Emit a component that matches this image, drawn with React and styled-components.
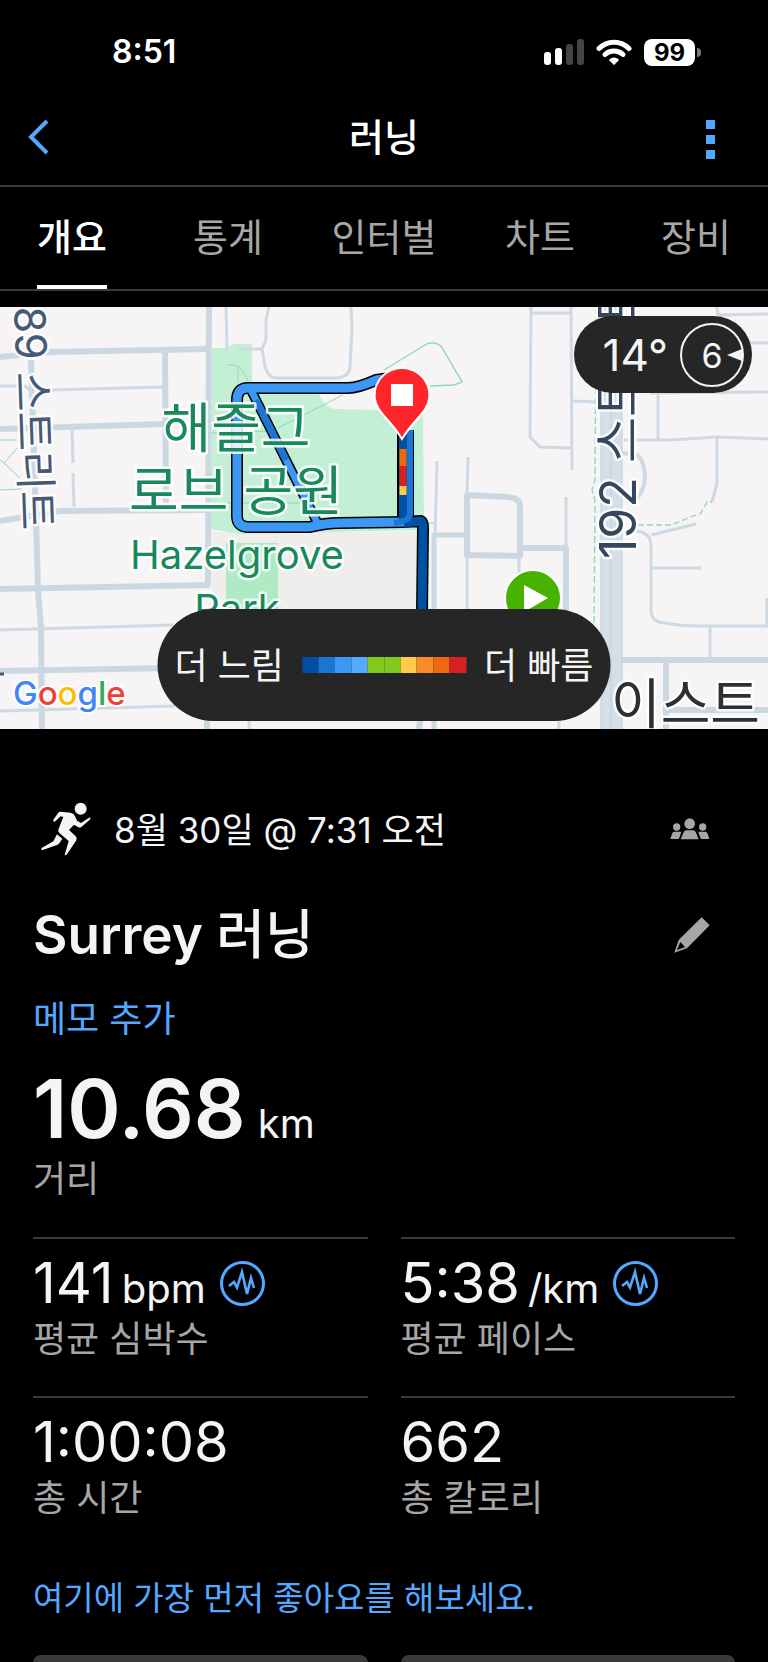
import React, { useState } from "react";
import styled, { createGlobalStyle } from "styled-components";

const GlobalStyle = createGlobalStyle`
  * {
    box-sizing: border-box;
  }

  body {
    margin: 0;
    background-color: #000;
    color: #f4f4f4;
    font-family: "Inter", "Noto Sans CJK KR", sans-serif;
  }

  button {
    padding: 0;
    border: none;
    background: none;
    color: inherit;
    font-family: inherit;
    cursor: pointer;
  }
`;

const Screen = styled.div`
  height: 100vh;
  overflow: hidden;
  display: flex;
  flex-direction: column;
`;

const StatusBar = styled.div`
  flex: none;
  height: 88px;
  padding: 16px 67px 0 112px;
  display: flex;
  justify-content: space-between;
  align-items: center;
  color: white;
`;

const Clock = styled.div`
  font-size: 32px;
  line-height: 40px;
  font-weight: 600;
`;

const StatusIcons = styled.div`
  display: flex;
  align-items: center;
  gap: 12px;
`;

const Battery = styled.div`
  display: flex;
  align-items: center;
  gap: 2px;
`;

const BatteryLevel = styled.div`
  width: 51px;
  height: 27px;
  border-radius: 8px;
  background-color: white;
  color: black;
  font-size: 24px;
  line-height: 27px;
  font-weight: 700;
  text-align: center;
`;

const BatteryTip = styled.div`
  width: 4px;
  height: 9px;
  border-radius: 0 4px 4px 0;
  background-color: #777;
`;

const Header = styled.header`
  flex: none;
  height: 99px;
  padding: 0 28px;
  display: grid;
  grid-template-columns: 1fr auto 1fr;
  align-items: center;
  border-bottom: 2px solid #3a3a3a;
`;

const HeaderTitle = styled.h1`
  margin: 0;
  color: white;
  font-size: 38px;
  line-height: 48px;
  font-weight: 500;
`;

const IconBtn = styled.button`
  display: flex;
  color: ${({ $color }) => $color || "#53a8ff"};
  justify-self: ${({ $end }) => ($end ? "end" : "start")};
`;

const MoreDots = styled.span`
  display: flex;
  flex-direction: column;
  gap: 6px;
  margin: 6px 25px 0;
`;

const Dot = styled.span`
  width: 9px;
  height: 9px;
  background-color: #53a8ff;
`;

const Tabs = styled.nav`
  flex: none;
  margin-bottom: 16px;
  border-bottom: 2px solid #3a3a3a;
`;

const TabList = styled.div`
  display: grid;
  grid-template-columns: repeat(5, 1fr);
  margin: 0 -6px;
`;

const Tab = styled.button`
  display: flex;
  justify-content: center;
  font-size: 38px;
  font-weight: ${({ $active }) => ($active ? 500 : 400)};
  color: ${({ $active }) => ($active ? "white" : "#a6a6a6")};
`;

const TabLabel = styled.span`
  height: 102px;
  line-height: 100px;
  border-bottom: 4px solid ${({ $active }) => ($active ? "white" : "transparent")};
`;

const MapArea = styled.section`
  flex: none;
  height: 422px;
  position: relative;
  overflow: hidden;
  background-color: #f6f4f5;
`;

const MapSvg = styled.svg`
  display: block;
  width: 100%;
  height: 100%;
`;

const Weather = styled.div`
  position: absolute;
  top: 9px;
  right: 16px;
  height: 77px;
  padding: 0 8px 0 28px;
  display: flex;
  align-items: center;
  gap: 12px;
  border-radius: 39px;
  background-color: #262626;
  font-size: 44px;
`;

const Legend = styled.div`
  position: absolute;
  bottom: 8px;
  left: 50%;
  transform: translateX(-50%);
  height: 112px;
  padding: 0 17px;
  display: flex;
  align-items: center;
  gap: 18px;
  border-radius: 56px;
  background-color: #262626;
  font-size: 36px;
  white-space: nowrap;
`;

const LegendText = styled.span`
  padding-bottom: 4px;
`;

const Scale = styled.div`
  width: 164px;
  height: 16px;
  display: flex;
`;

const Swatch = styled.span`
  flex: 1;
  background-color: ${({ $color }) => $color};
`;

const Content = styled.main`
  padding: 72px 33px 0;
`;

const Row = styled.div`
  display: flex;
  justify-content: space-between;
  align-items: center;
  padding-right: 25px;
`;

const TitleRow = styled(Row)`
  margin: 46px 0 30px;
`;

const DateInfo = styled.div`
  height: 56px;
  padding-left: 7px;
  display: flex;
  align-items: center;
  gap: 21px;
  font-size: 35px;
`;

const DateText = styled.span`
  padding-bottom: 4px;
`;

const Title = styled.h2`
  margin: 0;
  font-size: 53px;
  line-height: 64px;
  font-weight: 600;
`;

const Sport = styled.span`
  font-weight: 500;
`;

const TextLink = styled.a`
  display: block;
  color: #53a8ff;
  font-size: ${({ $size }) => $size}px;
  line-height: 44px;
  text-decoration: none;
`;

const Distance = styled.div`
  margin: 20px 0 0;
  font-size: 81px;
  line-height: 96px;
  font-weight: 600;
`;

const Unit = styled.span`
  margin-left: ${({ $gap }) => $gap}px;
  font-size: 40px;
  line-height: 1;
  font-weight: 400;
`;

const Label = styled.div`
  color: #a6a6a6;
  font-size: 36px;
  line-height: 44px;
`;

const Grid = styled.div`
  display: grid;
  grid-template-columns: 1fr 1fr;
  gap: 35px 33px;
  margin: 36px 0 56px;
`;

const Stat = styled.div`
  padding-top: 10px;
  border-top: 2px solid #3a3a3a;
`;

const StatValue = styled.div`
  display: flex;
  align-items: center;
  gap: 14px;
  font-size: 56px;
  line-height: 68px;
`;

const Actions = styled.div`
  display: grid;
  grid-template-columns: 1fr 1fr;
  gap: 33px;
  margin-top: 35px;
`;

const ActionBtn = styled.button`
  height: 80px;
  border-radius: 8px;
  background-color: #3a3a3a;
`;

const tabs = ["개요", "통계", "인터벌", "차트", "장비"];

const paceColors = [
  "#004fa3",
  "#1976d5",
  "#3d97f6",
  "#54aaff",
  "#82c91e",
  "#82c91e",
  "#ffcb4d",
  "#fa8b28",
  "#ec690f",
  "#d62021",
];

const stats = [
  { value: "141", unit: "bpm", label: "평균 심박수", zone: true },
  { value: "5:38", unit: "/km", label: "평균 페이스", zone: true },
  { value: "1:00:08", label: "총 시간" },
  { value: "662", label: "총 칼로리" },
];

const SignalIcon = () => (
  <svg width="40" height="27" viewBox="0 0 40 27">
    <rect x="0" y="13" width="7" height="13" rx="3" fill="white" />
    <rect x="11" y="9" width="7" height="17" rx="3" fill="white" />
    <rect x="22" y="5" width="7" height="21" rx="3" fill="#444" />
    <rect x="33" y="0" width="7" height="26" rx="3" fill="#444" />
  </svg>
);

const WifiIcon = () => (
  <svg width="36" height="27" viewBox="0 0 36 27" fill="none" stroke="white">
    <path d="M3 9.5 C11 1 25 1 33 9.5" strokeWidth="5" strokeLinecap="round" />
    <path d="M9 15.5 C14 10.8 22 10.8 27 15.5" strokeWidth="5" strokeLinecap="round" />
    <path d="M18 25.5 L13.4 21 C16 18.4 20 18.4 22.6 21 Z" fill="white" strokeWidth="1" strokeLinejoin="round" />
  </svg>
);

const BackIcon = () => (
  <svg width="22" height="36" viewBox="0 0 22 36" fill="none" stroke="currentColor" strokeWidth="4">
    <path d="M19 2 L3 18 L19 34" />
  </svg>
);

const RunnerIcon = () => (
  <svg width="53" height="56" viewBox="120 65 159 168" fill="#f4f4f4">
    <circle cx="242" cy="88" r="18" />
    <path d="M181 97 L212 100 Q222 102 225 111 L231 124 L243 131 L267 115 Q273 114 271 120 L244 143 Q240 146 235 144 L222 136 L207 152 L227 171 Q232 176 229 183 L201 225 Q197 230 194 226 L206 185 L178 161 Q172 155 176 148 L190 113 L182 111 L166 126 Q159 130 160 121 L175 100 Q177 97 181 97 Z" />
    <path d="M171 165 L187 178 L178 192 Q175 195 171 197 L128 212 Q121 212 125 206 L160 186 Z" />
  </svg>
);

const GroupIcon = () => (
  <svg width="40" height="22" viewBox="91 119 120 66" fill="currentColor">
    <circle cx="150" cy="136" r="16" />
    <circle cx="111" cy="146" r="11" />
    <circle cx="189" cy="146" r="11" />
    <path d="M123 183 L131 163 Q134 156 140 156 L160 156 Q166 156 169 163 L177 183 Z" />
    <path d="M92 182 L97 166 Q99 160 104 160 L125 160 Q122 172 117 182 Z" />
    <path d="M209 182 L204 166 Q202 160 197 160 L176 160 Q179 172 184 182 Z" />
  </svg>
);

const PencilIcon = () => (
  <svg width="36" height="36" viewBox="97 411 108 108" fill="currentColor">
    <path fillRule="evenodd" d="M180 412 L204 436 L136 505 L98 518 L111 480 Z M116 486 L130 501 L106 510 Z" />
  </svg>
);

const ZoneIcon = () => (
  <svg width="45" height="45" viewBox="0 0 45 45" fill="none" stroke="#53a8ff" strokeWidth="3">
    <circle cx="22.5" cy="22.5" r="21" />
    <path strokeWidth="2.6" d="M9 25 L14 21 L17 26.5 L22 11 L27 33 L31 17 L34 27" />
  </svg>
);

const WindIcon = () => (
  <svg width="64" height="64" viewBox="0 0 64 64">
    <circle cx="32" cy="32" r="31" fill="none" stroke="#f4f4f4" strokeWidth="2" />
    <path d="M47 32 L62 26 V38 Z" fill="#f4f4f4" />
    <text x="32" y="45" textAnchor="middle" fontSize="34" fill="#f4f4f4">
      6
    </text>
  </svg>
);

const ActivityMap = () => (
  <MapSvg viewBox="0 307 768 422" preserveAspectRatio="xMidYMid slice">
    {/* school grounds and park */}
    <path d="M212 532 H421 V612 H212 Z" fill="#efeeec" />
    <path d="M226 543 H278 V612 H226 Z" fill="#aeebc5" />
    <path
      d="M212 348 H229 L232 344 H252 V386 L318 392 Q325 409 337 409 L423 411 L424 530 L240 534 L211 529 Z"
      fill="#c3f0d5"
    />

    {/* streets */}
    <g fill="none" stroke="#ccd8e1" strokeWidth="6" strokeLinejoin="round">
      <path d="M0 357 L50 352 L209 349" />
      <path d="M209 307 L208 585 M207 715 V729" />
      <path d="M165 350 L166 504" />
      <path d="M0 429 L164 424" />
      <path d="M0 521 L60 511 L208 510" />
      <path d="M31 360 L36 520 L38 590 L41 627 L42 729" />
      <path d="M0 589 L210 585" />
      <path d="M0 671 L170 668" />
      <path d="M434 729 V610 V535 H465" strokeWidth="5" />
      <path d="M467 495 L507 497 Q520 498 520 506 V556 L467 555 Z" />
      <path d="M520 548 H566 V615" />
      <path d="M622 660 H768 M666 660 V729 M666 710 H768" />
      <path d="M421 715 L419 729" />
    </g>
    <g fill="none" stroke="#ced9e3" strokeWidth="3" strokeLinejoin="round">
      <path d="M226 307 L227 350" />
      <path d="M269 307 L266 320 V340 L262 349 H238 M262 349 L265 366 Q268 378 276 378 H338 Q350 376 350 366 L352 330 L351 307" />
      <path d="M0 386 H25 L32 392 M50 390 L164 387" />
      <path d="M72 430 L73 463 M73 473 L74 507" />
      <path d="M0 630 L173 625 M0 711 L175 706 M249 715 V729" />
      <path d="M531 307 L530 437 L540 447 L572 448 M531 313 H571 M571 307 L572 470" />
      <path d="M572 401 L596 402" />
      <path d="M717 307 L718 315 L768 314 M750 343 H768 M650 393 L768 392 M658 393 V439" />
      <path d="M624 440 H671 L717 437 L768 439 M717 437 V483 L712 502" />
      <path d="M622 453 L637 455 Q644 460 645 477 Q645 492 632 504" strokeWidth="4" />
      <path d="M437 461 L435 535 M468 457 L467 495 M467 556 V615 M519 556 V580 M566 497 V548" />
      <path d="M634 531 Q650 531 651 545 V610 Q651 622 664 623 Q680 626 700 626 H768" />
      <path d="M651 535 L696 524 M651 568 H701 M710 626 V657 M767 598 V626 M559 715 V729" />
    </g>
    <path d="M601 307 H622 V729 H601 Z" fill="#d5dfe7" />
    <path d="M601 307 V729 M611 307 V729 M622 307 V729" stroke="#c3ced8" />

    {/* trails */}
    <g fill="none" stroke="#96d6bb" strokeWidth="1">
      <path d="M0 440 H17 M17 448 L4 463 L0 460 M4 463 L20 478 M0 490 L22 489" />
      <path d="M227 365 Q238 364 242 370 L249 383 M238 366 V382 M343 395 L278 428 M211 433 L267 431 M211 503 H310" />
      <path d="M384 370 L425 345 Q433 340 441 346 L462 382 L454 385 L430 386" strokeWidth="1.4" />
      <path d="M424 523 H434" />
      <path d="M596 307 L595 480 L592 490 L595 500 L594 626" strokeDasharray="7 3" strokeWidth="1.4" />
      <path d="M638 525 L671 525 L701 513 L707 502 L712 502" strokeDasharray="6 3" strokeWidth="1.4" />
    </g>

    {/* the run itself: black casing, then pace colours */}
    <g fill="none" strokeLinejoin="round">
      <g stroke="black" strokeWidth="12">
        <path d="M404 522 L421 521 Q423 522 423 528 L422 612" />
        <path d="M251 390 L312 512 L319 526" strokeWidth="10" />
        <path d="M404 376 L376 380 Q358 388 348 388 H248 Q237 388 237 400 V516 Q237 526 247 527 H310 Q325 523 340 523 L404 522" />
        <path d="M403 430 V522 M408 430 V522" />
      </g>
      <g stroke="#3d97f5" strokeWidth="9">
        <path d="M251 390 L312 512 L319 526" strokeWidth="7" />
        <path d="M404 376 L376 380 Q358 388 348 388 H248 Q237 388 237 400 V516 Q237 526 247 527 H310 Q325 523 340 523 L404 522" />
      </g>
      <path d="M256 400 L286 460" stroke="#1d74d2" strokeWidth="7" />
      <path d="M404 523 L421 521 Q423 522 423 529 L422 612" stroke="#0050a4" strokeWidth="9" />
      <path d="M403 430 V522" stroke="#0050a4" strokeWidth="8" />
      <path d="M410 430 V514 Q410 521 394 523" stroke="#1d74d2" strokeWidth="6" />
      <path d="M403 449 V466" stroke="#ec690f" strokeWidth="7" />
      <path d="M403 466 V486" stroke="#d62021" strokeWidth="7" />
      <path d="M403 486 V495" stroke="#ffcb4d" strokeWidth="7" />
    </g>

    {/* place names */}
    <g stroke="white" strokeOpacity="0.85" strokeWidth="5" strokeLinejoin="round" paintOrder="stroke">
      <g fill="#19885d" textAnchor="middle" fontSize="54">
        <text x="236" y="448">해즐그</text>
        <text x="236" y="511">로브 공원</text>
        <text x="237" y="569" fontSize="40">Hazelgrove</text>
        <text x="237" y="623" fontSize="40">Park</text>
      </g>
      <text transform="translate(14 307) rotate(88)" fontSize="43" fill="#475974">
        89 스트리트
      </text>
      <text transform="translate(636 559) rotate(-90)" fontSize="50" fill="#35475c">
        192 스트리트
      </text>
      <text x="611" y="724" fontSize="54" fill="#2c2f33">이스트</text>
    </g>
    <path d="M0 674 H4" stroke="#475974" strokeWidth="3" />
    <text
      x="13"
      y="705"
      fontSize="33"
      fontWeight="500"
      stroke="white"
      strokeWidth="4"
      paintOrder="stroke"
    >
      <tspan fill="#4285f4">G</tspan>
      <tspan fill="#ea4335">o</tspan>
      <tspan fill="#fbbc05">o</tspan>
      <tspan fill="#4285f4">g</tspan>
      <tspan fill="#34a853">l</tspan>
      <tspan fill="#ea4335">e</tspan>
    </text>

    {/* start and finish */}
    <circle cx="533" cy="598" r="28" fill="#48b200" stroke="white" strokeWidth="2" />
    <path d="M524 585 L548 598 L524 612 Z" fill="white" />
    <path
      d="M402 439 Q396 429 384 416 C374 405 374 395 375 390 C378 376 390 368 402 368 C414 368 426 376 429 390 C430 395 430 405 420 416 Q408 429 402 439 Z"
      fill="#ff262b"
      stroke="white"
      strokeWidth="2"
    />
    <rect x="391" y="384" width="22" height="22" fill="white" />
  </MapSvg>
);

const App = () => {
  const [active, setActive] = useState("개요");

  return (
    <Screen>
      <GlobalStyle />
      <StatusBar>
        <Clock>8:51</Clock>
        <StatusIcons>
          <SignalIcon />
          <WifiIcon />
          <Battery>
            <BatteryLevel>99</BatteryLevel>
            <BatteryTip />
          </Battery>
        </StatusIcons>
      </StatusBar>

      <Header>
        <IconBtn aria-label="뒤로">
          <BackIcon />
        </IconBtn>
        <HeaderTitle>러닝</HeaderTitle>
        <IconBtn aria-label="더 보기" $end>
          <MoreDots>
            <Dot />
            <Dot />
            <Dot />
          </MoreDots>
        </IconBtn>
      </Header>

      <Tabs>
        <TabList>
          {tabs.map((tab) => (
            <Tab key={tab} $active={tab === active} onClick={() => setActive(tab)}>
              <TabLabel $active={tab === active}>{tab}</TabLabel>
            </Tab>
          ))}
        </TabList>
      </Tabs>

      <MapArea>
        <ActivityMap />
        <Weather>
          14°
          <WindIcon />
        </Weather>
        <Legend>
          <LegendText>더 느림</LegendText>
          <Scale>
            {paceColors.map((color, index) => (
              <Swatch key={index} $color={color} />
            ))}
          </Scale>
          <LegendText>더 빠름</LegendText>
        </Legend>
      </MapArea>

      <Content>
        <Row>
          <DateInfo>
            <RunnerIcon />
            <DateText>8월 30일 @ 7:31 오전</DateText>
          </DateInfo>
          <IconBtn aria-label="공개 범위" $color="#a6a6a6">
            <GroupIcon />
          </IconBtn>
        </Row>
        <TitleRow>
          <Title>
            Surrey <Sport>러닝</Sport>
          </Title>
          <IconBtn aria-label="이름 편집" $color="#a6a6a6">
            <PencilIcon />
          </IconBtn>
        </TitleRow>
        <TextLink href="#memo" $size={36}>
          메모 추가
        </TextLink>
        <Distance>
          10.68
          <Unit $gap={12}>km</Unit>
        </Distance>
        <Label>거리</Label>

        <Grid>
          {stats.map(({ value, unit, label, zone }) => (
            <Stat key={label}>
              <StatValue>
                <span>
                  {value}
                  {unit && <Unit $gap={8}>{unit}</Unit>}
                </span>
                {zone && <ZoneIcon />}
              </StatValue>
              <Label>{label}</Label>
            </Stat>
          ))}
        </Grid>

        <TextLink href="#like" $size={33}>
          여기에 가장 먼저 좋아요를 해보세요.
        </TextLink>
        <Actions>
          <ActionBtn aria-label="좋아요" />
          <ActionBtn aria-label="댓글" />
        </Actions>
      </Content>
    </Screen>
  );
};

export default App;
